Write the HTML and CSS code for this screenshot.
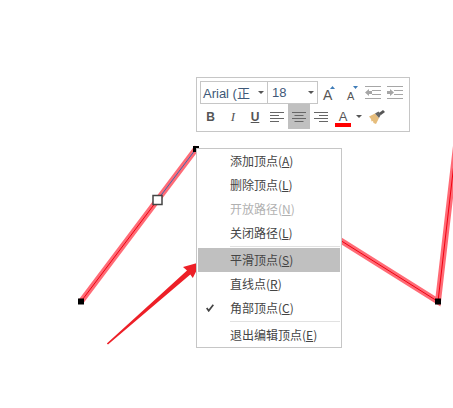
FILE: index.html
```html
<!DOCTYPE html>
<html lang="zh">
<head>
  <meta charset="UTF-8">
  <title>编辑顶点</title>
  <link rel="stylesheet" href="styles.css">
</head>
<body>

  <svg class="canvas" width="453" height="408" viewBox="0 0 453 408">
    <!-- shape outline -->
    <polyline class="glow" points="81,301.500 195.500,149.500 438,301.500 456,146"/>
    <polyline class="core" points="81,301.500 157.500,200"/>
    <polyline class="core blue" points="157.500,200 195.500,149.500"/>
    <polyline class="core" points="195.500,149.500 438,301.500 456,146"/>
    <rect class="node" x="78" y="298.500" width="6" height="6"/>
    <rect class="node" x="193" y="146" width="6" height="6"/>
    <rect class="node" x="435" y="298.500" width="6" height="6"/>
    <rect class="handle" x="153" y="195.500" width="9" height="9"/>
    <!-- annotation arrow -->
    <polygon class="arrow" points="106.800,343.400 187,270.500 183,267 200.800,262 192.800,278 190.300,274.500 108,344.600"/>
  </svg>

  <div class="toolbar">
    <div class="tool-row">
      <div class="combo combo-font">
        <span class="combo-text">Arial (正</span>
        <span class="caret"></span>
      </div>
      <div class="combo combo-size">
        <span class="combo-text">18</span>
        <span class="caret"></span>
      </div>
      <div class="tool tool-grow">
        <span class="big-a">A</span>
        <svg class="tri" width="5" height="3" viewBox="0 0 5 3"><polygon points="0,3 2.500,0 5,3" fill="#3f7cb8"/></svg>
      </div>
      <div class="tool tool-shrink">
        <span class="small-a">A</span>
        <svg class="tri" width="5" height="3" viewBox="0 0 5 3"><polygon points="0,0 5,0 2.500,3" fill="#3f7cb8"/></svg>
      </div>
      <div class="tool tool-indent">
        <svg width="16" height="13" viewBox="0 0 16 13">
          <path class="muted" d="M0 .5h16M7 4.500h9M7 8.500h9M0 12.500h16"/>
          <path class="muted-fill" d="M0 6.500l4-3.500v2h3v3H4v2z"/>
        </svg>
      </div>
      <div class="tool">
        <svg width="16" height="13" viewBox="0 0 16 13">
          <path class="muted" d="M0 .5h16M7 4.500h9M7 8.500h9M0 12.500h16"/>
          <path class="muted-fill" d="M7 6.500L3 3v2H0v3h3v2z"/>
        </svg>
      </div>
    </div>
    <div class="tool-row">
      <div class="tool tool-b">B</div>
      <div class="tool tool-i">I</div>
      <div class="tool tool-u">U</div>
      <div class="tool">
        <svg width="14" height="10" viewBox="0 0 14 10"><path class="lines" d="M0 .5h14M0 3.500h9M0 6.500h14M0 9.500h9"/></svg>
      </div>
      <div class="tool tool-on">
        <svg width="14" height="10" viewBox="0 0 14 10"><path class="lines" d="M0 .5h14M2.500 3.500h9M0 6.500h14M2.500 9.500h9"/></svg>
      </div>
      <div class="tool">
        <svg width="14" height="10" viewBox="0 0 14 10"><path class="lines" d="M0 .5h14M5 3.500h9M0 6.500h14M5 9.500h9"/></svg>
      </div>
      <div class="tool tool-color">
        <span class="color-a">A</span>
        <span class="color-bar"></span>
      </div>
      <div class="tool-drop"><span class="caret"></span></div>
      <div class="tool tool-brush">
        <svg width="16" height="14" viewBox="0 0 16 14">
          <polygon points="0,6.500 6,3.500 10,8 7,14 4.500,13 4,11 2.500,11.500 2,9" fill="#e6bd7c"/>
          <polygon points="6,3.500 9.500,1.500 12,4.500 10,8" fill="#666"/>
          <polygon points="10,3 14,0 16,2 12,5" fill="#555"/>
        </svg>
      </div>
    </div>
  </div>

  <div class="menu">
    <div class="menu-item">添加顶点(<u>A</u>)</div>
    <div class="menu-item">删除顶点(<u>L</u>)</div>
    <div class="menu-item disabled">开放路径(<u>N</u>)</div>
    <div class="menu-item">关闭路径(<u>L</u>)</div>
    <div class="menu-sep"></div>
    <div class="menu-item active">平滑顶点(<u>S</u>)</div>
    <div class="menu-item">直线点(<u>R</u>)</div>
    <div class="menu-item">
      <svg class="check" width="8" height="8" viewBox="0 0 8 8"><path d="M.7 4l2 2.800L7.300 .7" fill="none" stroke="#444" stroke-width="1.700"/></svg>
      角部顶点(<u>C</u>)
    </div>
    <div class="menu-sep"></div>
    <div class="menu-item">退出编辑顶点(<u>E</u>)</div>
  </div>

</body>
</html>
```

FILE: styles.css
```css
body {
  margin: 0;
  width: 453px;
  height: 408px;
  position: relative;
  overflow: hidden;
  background: #fff;
  font-family: "Noto Sans CJK SC", "Noto Sans", sans-serif;
  color: #444;
}

.canvas {
  position: absolute;
  left: 0;
  top: 0;
}

.glow {
  fill: none;
  stroke: #ff6b76;
  stroke-width: 6;
}

.core {
  fill: none;
  stroke: #f00010;
  stroke-width: 1;
}

.core.blue {
  stroke: #3d68b0;
}

.node {
  fill: #000;
}

.handle {
  fill: #fff;
  stroke: #444;
  stroke-width: 1.5;
}

.arrow {
  fill: #ed1f27;
}

/* mini toolbar */
.toolbar {
  position: absolute;
  left: 196px;
  top: 77px;
  width: 214px;
  height: 55px;
  box-sizing: border-box;
  border: 1px solid #c6c6c6;
  background: #fff;
  padding: 3px 3px 2px;
}

.tool-row {
  display: flex;
  height: 25px;
}

.tool-row:first-child {
  height: 23px;
}

.combo {
  display: flex;
  align-items: center;
  box-sizing: border-box;
  height: 23px;
  border: 1px solid #c6c6c6;
  font-family: "Liberation Sans", "Noto Sans CJK SC", sans-serif;
  font-size: 13px;
  color: #3e5878;
  padding-left: 2px;
}

.combo-text {
  white-space: nowrap;
}

.combo-font {
  width: 68px;
}

.combo-font .combo-text {
  width: 55px;
}

.combo-size {
  width: 50px;
  border-left-width: 0;
  padding-left: 4px;
}

.combo-size .combo-text {
  width: 36px;
}

.caret {
  display: block;
  width: 0;
  height: 0;
  border-left: 3px solid transparent;
  border-right: 3px solid transparent;
  border-top: 3px solid #555;
}

.tool {
  width: 22px;
  flex: none;
  display: flex;
  align-items: center;
  justify-content: center;
  font-family: "Liberation Sans", sans-serif;
  color: #555;
  box-sizing: border-box;
}

.tool-row:first-child .tool {
  width: 22px;
}

.tool-row:first-child .tool-grow,
.tool-row:first-child .tool-shrink {
  align-items: flex-start;
  justify-content: flex-start;
}

.tool-row:first-child .tool-grow {
  width: 24px;
  padding: 5px 0 0 5px;
}

.tool-row:first-child .tool-shrink {
  width: 20px;
  padding: 5px 0 0 5px;
}

.tri {
  flex: none;
}

.big-a {
  font-size: 14px;
  line-height: 14px;
  margin: 2px -2px 0 0;
}

.small-a {
  font-size: 11px;
  line-height: 12px;
  margin: 4px -1px 0 0;
}

.muted {
  stroke: #a6a6a6;
  fill: none;
}

.muted-fill {
  fill: #a6a6a6;
}

.lines {
  stroke: #666;
  fill: none;
}

.tool-b {
  font-weight: bold;
  font-size: 12px;
  padding-right: 1px;
}

.tool-i {
  font-family: "Liberation Serif", serif;
  font-style: italic;
  font-size: 13px;
}

.tool-u {
  font-weight: bold;
  font-size: 12px;
  text-decoration: underline;
}

.tool-on {
  background: #c0c0c0;
}

.tool-color {
  flex-direction: column;
  padding-top: 3px;
}

.color-a {
  font-size: 13px;
  line-height: 13px;
}

.color-bar {
  display: block;
  width: 16px;
  height: 4px;
  background: #f00;
}

.tool-drop {
  width: 10px;
  display: flex;
  align-items: center;
  justify-content: center;
}

.tool-row .tool-brush {
  width: 26px;
}

/* context menu */
.menu {
  position: absolute;
  left: 196px;
  top: 148px;
  width: 146px;
  height: 200px;
  box-sizing: border-box;
  border: 1px solid #c6c6c6;
  background: #fff;
  padding: 0 1px;
}

.menu-item {
  position: relative;
  height: 24px;
  line-height: 24px;
  padding-left: 32px;
  font-size: 12px;
  white-space: nowrap;
}

.menu-item u {
  text-underline-offset: 1px;
}

.menu-item.disabled {
  color: #b1b1b1;
}

.menu-item.active {
  background: #c0c0c0;
}

.check {
  position: absolute;
  left: 8px;
  top: 8px;
}

.menu-sep {
  height: 1px;
  background: #e1e1e1;
  margin: 1px 0 1px 32px;
}
```
